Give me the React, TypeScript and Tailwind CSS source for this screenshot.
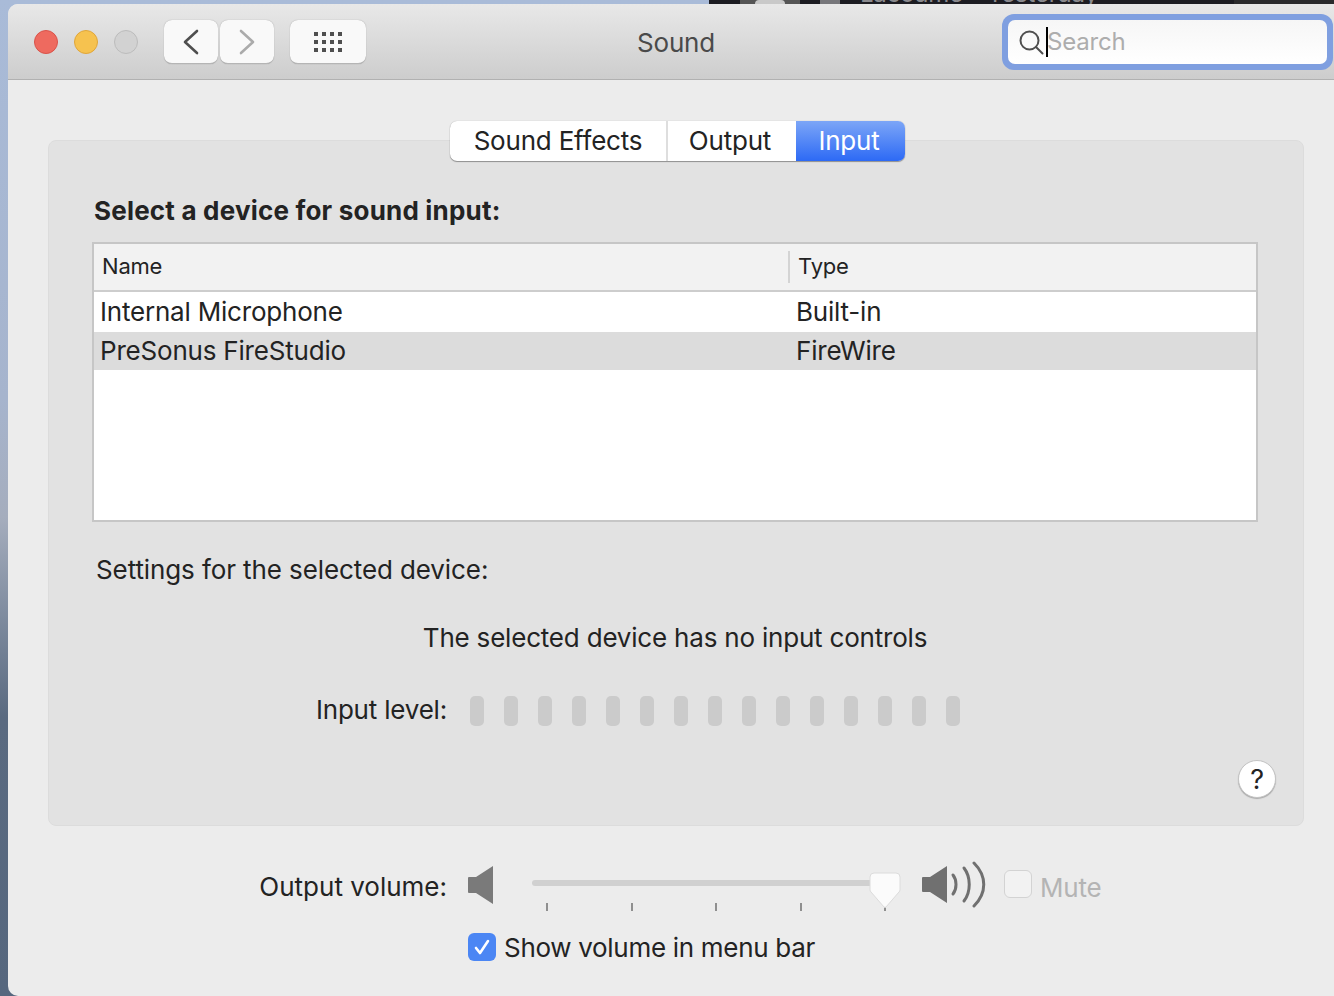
const font = { fontFamily: "Inter, 'Liberation Sans', sans-serif" };

export default function App() {
  return (
    <div
      className="w-[1334px] h-[996px] overflow-hidden flex flex-col tracking-[-0.2px] bg-[linear-gradient(180deg,#a9bbd8_0%,#a6b4cd_40%,#a5adbd_52%,#7e8b9e_62%,#5a6a80_72%,#56677e_100%)] font-['Inter','Liberation_Sans',sans-serif] text-[#232323]"
      style={font}
    >
      <TopStrip />
      <div className="flex-1 ml-2 flex flex-col bg-[#ececec] rounded-tl-[10px] rounded-bl-[10px] overflow-hidden">
        <TitleBar />
        <div className="flex-1 flex flex-col">
          <TabbedPanel />
          <VolumeControls />
        </div>
      </div>
    </div>
  );
}

// the desktop behind the window, only its last few pixels show
function TopStrip() {
  return (
    <div className="h-1 flex overflow-hidden">
      <div className="w-[709px]" />
      <div className="w-[525px] bg-[#1c1c22] overflow-hidden flex text-[#8a8a8e] text-[24px] leading-none">
        <div className="ml-[31px] w-[60px] h-1 bg-[#555555] flex justify-center">
          <div className="w-[30px] h-1 rounded-t-full bg-[#c9c9c9]" />
        </div>
        <div className="ml-[20px] w-[20px] h-1 bg-[#77777b]" />
        <span className="ml-[20px] -mt-[18px]">Lacoume</span>
        <span className="ml-[24px] -mt-[18px]">Yesterday</span>
      </div>
      <div className="flex-1 bg-[#2a2a2c]" />
    </div>
  );
}

function TitleBar() {
  return (
    <div className="h-[76px] shrink-0 flex items-start border-b border-[#b1b1b1] bg-[linear-gradient(180deg,#e8e8e8_0%,#cdcdcd_100%)]">
      <div className="flex items-center gap-4 mt-[26px] ml-[26px]">
        <Light className="bg-[#ee6a5f] border-[#d9534a]" />
        <Light className="bg-[#f6c24f] border-[#e0a63a]" />
        <Light className="bg-[#d2d2d2] border-[#bcbcbc]" />
      </div>
      <div className="flex gap-0.5 mt-4 ml-[26px]">
        <ToolButton width="w-[54px]">
          <svg width="16" height="26" viewBox="0 0 16 26" fill="none" stroke="#4f4f4f" strokeWidth="2.6" strokeLinecap="round" strokeLinejoin="round">
            <path d="M14 2 2 13l12 11" />
          </svg>
        </ToolButton>
        <ToolButton width="w-[54px]">
          <svg width="16" height="26" viewBox="0 0 16 26" fill="none" stroke="#ababab" strokeWidth="2.6" strokeLinecap="round" strokeLinejoin="round">
            <path d="m2 2 12 11L2 24" />
          </svg>
        </ToolButton>
      </div>
      <div className="mt-4 ml-4">
        <ToolButton width="w-[76px]">
          <div className="grid grid-cols-4 gap-x-[4px] gap-y-[4px]">
            {Array.from({ length: 12 }).map((_, i) => (
              <div key={i} className="w-[4px] h-[4px] bg-[#4f4f4f]" />
            ))}
          </div>
        </ToolButton>
      </div>
      <div className="flex-1 pr-4 pt-[21px] text-center text-[26px] leading-[36px] text-[#4a4a4a]">Sound</div>
      <SearchField />
    </div>
  );
}

function Light({ className }: { className: string }) {
  return <div className={`w-6 h-6 rounded-full border ${className}`} />;
}

function ToolButton({ width, children }: { width: string; children: React.ReactNode }) {
  return (
    <div className={`${width} h-11 rounded-[8px] bg-[#f9f9f9] border-b border-[#b5b5b5] shadow-[0_0_1px_rgba(0,0,0,0.35)] flex items-center justify-center`}>
      {children}
    </div>
  );
}

function SearchField() {
  return (
    <div className="mt-[10px] mr-[1px] w-[331px] h-14 rounded-[12px] bg-[#7f9fe0] p-[6px]">
      <div className="h-full rounded-[7px] bg-[linear-gradient(180deg,#f6f6f6_0%,#ffffff_100%)] flex items-center pl-[10px]">
        <svg width="26" height="26" viewBox="0 0 26 26" fill="none" stroke="#4f4f4f" strokeLinecap="round">
          <circle cx="11.5" cy="11.5" r="9" strokeWidth="2" />
          <path d="m18 18 6.5 6.5" strokeWidth="2" />
        </svg>
        <div className="w-[2px] h-[30px] bg-black ml-[2px]" />
        <span className="text-[24px] leading-none text-[#adadad] -ml-[1px]">Search</span>
      </div>
    </div>
  );
}

function TabbedPanel() {
  return (
    <div className="mt-[60px] ml-10 mr-[30px] h-[686px] rounded-[8px] bg-[#e2e2e2] border border-[#dcdcdc] flex flex-col">
      <div className="-mt-[20px] flex justify-center pl-[3px]">
        <div className="w-[455px] h-10 flex rounded-[7px] overflow-hidden bg-white shadow-[0_1px_1px_rgba(0,0,0,0.35),0_0_1px_rgba(0,0,0,0.3)] text-[26px] leading-[40px]">
          <div className="w-[218px] text-center border-r-2 border-[#dedede]">Sound Effects</div>
          <div className="w-[128px] text-center pr-[4px]">Output</div>
          <div className="flex-1 text-center pr-[3px] text-white bg-[linear-gradient(180deg,#7ca6f7_0%,#2d6af5_100%)]">Input</div>
        </div>
      </div>

      <div className="pl-[45px] mt-[32px] font-bold text-[26px] leading-[36px] tracking-[0.2px]">Select a device for sound input:</div>

      <div className="ml-[43px] mt-[13px] w-[1166px] h-[280px] border-2 border-[#c6c6c6] bg-white flex flex-col">
        <div className="h-[48px] shrink-0 flex items-center bg-[#f2f2f2] border-b-2 border-[#cdcdcd] text-[22px]">
          <div className="w-[696px] pl-[8px] h-[32px] leading-[30px] border-r-2 border-[#d4d4d4]">Name</div>
          <div className="pl-[8px] pb-[2px]">Type</div>
        </div>
        <DeviceRow name="Internal Microphone" type="Built-in" rowClass="h-10" />
        <DeviceRow name="PreSonus FireStudio" type="FireWire" rowClass="h-[38px] bg-[#dcdcdc]" />
      </div>

      <div className="pl-[47px] mt-[30px] text-[26px] leading-[36px] tracking-[-0.1px]">Settings for the selected device:</div>
      <div className="mt-[32px] text-center text-[26px] leading-[36px] pr-[2px]">The selected device has no input controls</div>

      <div className="mt-[35px] h-[36px] flex items-center">
        <div className="w-[398px] pt-[2px] text-right text-[26px] leading-[36px]">Input level:</div>
        <div className="ml-[23px] flex gap-5 mt-[4px]">
          {Array.from({ length: 15 }).map((_, i) => (
            <div key={i} className="w-[14px] h-[30px] rounded-[5px] bg-[#cbcbcb]" />
          ))}
        </div>
      </div>

      <div className="mt-[33px] mr-[27px] flex justify-end">
        <div className="w-[38px] h-[38px] rounded-full bg-white border border-[#c4c4c4] shadow-[0_1px_1px_rgba(0,0,0,0.25)] flex items-center justify-center text-[27px] leading-none">?</div>
      </div>
    </div>
  );
}

function DeviceRow({ name, type, rowClass }: { name: string; type: string; rowClass: string }) {
  return (
    <div className={`${rowClass} shrink-0 flex items-center text-[26px] pb-[2px]`}>
      <div className="w-[696px] pl-[6px]">{name}</div>
      <div className="pl-[6px]">{type}</div>
    </div>
  );
}

function VolumeControls() {
  return (
    <div className="flex flex-col">
      <div className="mt-[30px] h-[56px] flex items-start">
        <div className="w-[439px] mr-[1px] text-right text-[26px] leading-[36px] mt-[13px] tracking-[0px]">Output volume:</div>
        <svg className="ml-[20px] mt-[10px]" width="26" height="38" viewBox="0 0 26 38">
          <path d="M1 11h7L25 0v38L8 27H1a1 1 0 0 1-1-1V12a1 1 0 0 1 1-1z" fill="#7a7a7a" />
        </svg>
        <Slider />
        <svg className="ml-[21px] mt-[5px]" width="64" height="50" viewBox="0 0 64 50" fill="none">
          <path d="M1 16h7l17-11v37L8 31H1a1 1 0 0 1-1-1V17a1 1 0 0 1 1-1z" fill="#707070" />
          <g stroke="#707070" strokeLinecap="round">
            <path d="M31 14c4 5 4 14 0 19" strokeWidth="3" />
            <path d="M42 7c7 9 7 24 0 33" strokeWidth="3" />
            <path d="M52 2c13 13 13 30 0 43" strokeWidth="3" />
          </g>
        </svg>
        <div className="ml-[18px] mt-[14px] w-[28px] h-[28px] rounded-[6px] bg-[#f2f2f2] border border-[#d3d3d3]" />
        <div className="ml-[8px] mt-[14px] text-[26px] leading-[36px] text-[#b4b4b4]">Mute</div>
      </div>
      <div className="mt-[16px] flex items-center">
        <div className="ml-[460px] w-[28px] h-[28px] rounded-[6px] bg-[#4b86f4] flex items-center justify-center">
          <svg width="18" height="18" viewBox="0 0 18 18" fill="none" stroke="#fff" strokeWidth="2.6" strokeLinecap="round" strokeLinejoin="round">
            <path d="M3 10l4 5 8-12" />
          </svg>
        </div>
        <span className="ml-2 pt-[2px] text-[26px] leading-[36px] tracking-[-0.3px]">Show volume in menu bar</span>
      </div>
    </div>
  );
}

function Slider() {
  return (
    <div className="ml-[38px] mt-[20px] w-[369px] h-[40px] relative">
      <div className="mt-[4px] w-[345px] h-[6px] rounded-full bg-[#d0d0d0]" />
      <div className="mt-[17px] ml-[14px] w-[340px] flex justify-between">
        {[0, 1, 2, 3, 4].map((i) => (
          <div key={i} className="w-[2px] h-2 bg-[#8f8f8f]" />
        ))}
      </div>
      <svg className="absolute left-[337px] -top-[4px]" width="32" height="38" viewBox="0 0 32 38">
        <path d="M5 1h22a4 4 0 0 1 4 4v13a3 3 0 0 1-1 2L17 35a1.5 1.5 0 0 1-2 0L2 20a3 3 0 0 1-1-2V5a4 4 0 0 1 4-4z" fill="#fbfbfb" stroke="#dcdcdc" />
      </svg>
    </div>
  );
}
